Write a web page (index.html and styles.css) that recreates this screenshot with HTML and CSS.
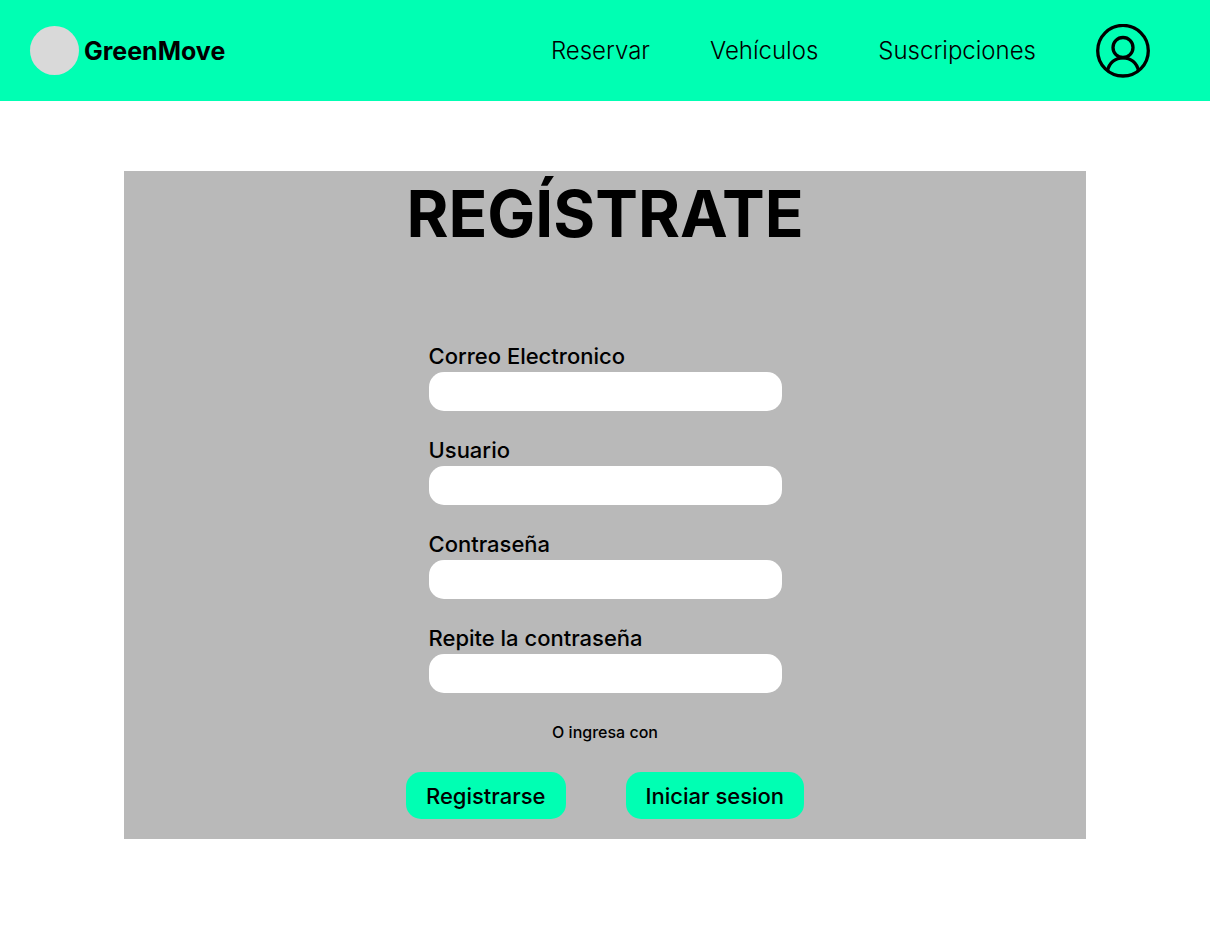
FILE: index.html
```html
<!DOCTYPE html>
<html lang="es">
<head>
  <meta charset="utf-8">
  <meta name="viewport" content="width=device-width, initial-scale=1">
  <title>GreenMove</title>
  <link rel="stylesheet" href="styles.css">
</head>
<body>
  <header class="header">
    <a class="brand" href="#"><span class="brand-mark"></span>GreenMove</a>
    <nav class="nav">
      <a href="#">Reservar</a>
      <a href="#">Vehículos</a>
      <a href="#">Suscripciones</a>
      <a class="account" href="#" aria-label="Cuenta">
        <svg viewBox="0 0 54 54" fill="none" stroke="currentColor" stroke-width="3.3">
          <circle cx="27" cy="26.700" r="25.300"/>
          <circle cx="27" cy="23.500" r="10"/>
          <path d="M11.500 47C13 38.500 19.500 33.800 27 33.800S41 38.500 42.500 47"/>
        </svg>
      </a>
    </nav>
  </header>
  <main class="main">
    <form class="card">
      <h1 class="title">REGÍSTRATE</h1>
      <div class="fields">
        <div class="field"><label for="email">Correo Electronico</label><input id="email" type="email"></div>
        <div class="field"><label for="user">Usuario</label><input id="user" type="text"></div>
        <div class="field"><label for="pass">Contraseña</label><input id="pass" type="password"></div>
        <div class="field"><label for="pass2">Repite la contraseña</label><input id="pass2" type="password"></div>
      </div>
      <p class="alt">O ingresa con</p>
      <div class="actions">
        <button class="btn" type="submit">Registrarse</button>
        <button class="btn" type="button">Iniciar sesion</button>
      </div>
    </form>
  </main>
</body>
</html>
```
FILE: styles.css
```css
* { box-sizing: border-box; }

body {
  margin: 0;
  background: #fff;
  color: #000;
  font-family: Inter, sans-serif;
}

a { color: inherit; text-decoration: none; }

.header {
  display: flex;
  flex-wrap: wrap;
  align-items: center;
  justify-content: space-between;
  min-height: 101px;
  padding: 23px 60px 23px 30px;
  background: #00ffb3;
}

.brand {
  display: flex;
  align-items: center;
  gap: 5px;
  font-size: 25px;
  font-weight: 700;
}

.brand-mark {
  width: 49px;
  height: 49px;
  border-radius: 50%;
  background: #d9d9d9;
}

.nav {
  display: flex;
  flex-wrap: wrap;
  align-items: center;
  gap: 16px 60px;
  font-size: 24px;
  font-weight: 300;
}

.account { display: flex; }
.account svg { width: 54px; height: 54px; }

.main {
  max-width: 1002px;
  margin: 0 auto;
  padding: 70px 20px;
}

.card {
  display: flex;
  flex-direction: column;
  align-items: center;
  padding-bottom: 20px;
  background: #b9b9b9;
}

.title {
  margin: 0 0 86px;
  font-size: 64px;
  font-weight: 700;
  line-height: 86px;
}

.fields {
  display: flex;
  flex-direction: column;
  gap: 26px;
  width: 353px;
  max-width: 100%;
}

.field {
  display: flex;
  flex-direction: column;
  gap: 2px;
}

.field label {
  font-size: 22px;
  font-weight: 500;
  line-height: 27px;
}

.field input {
  width: 100%;
  height: 39px;
  padding: 0 15px;
  border: 0;
  border-radius: 15px;
  background: #fff;
  font: inherit;
}

.alt {
  margin: 30px 0;
  font-size: 16px;
  font-weight: 500;
  line-height: 19px;
}

.actions {
  display: flex;
  flex-wrap: wrap;
  justify-content: center;
  gap: 20px 60px;
}

.btn {
  padding: 11px 20px 9px;
  border: 0;
  border-radius: 15px;
  background: #00ffb3;
  color: #000;
  font: 500 22px/27px Inter, sans-serif;
}
```
